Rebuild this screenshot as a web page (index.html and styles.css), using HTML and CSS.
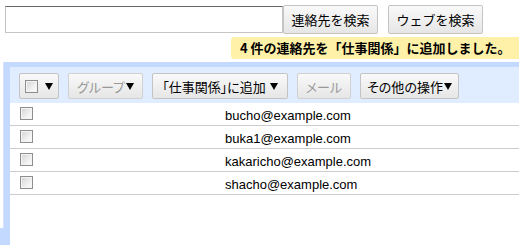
FILE: index.html
```html
<!DOCTYPE html>
<html lang="ja">
<head>
<meta charset="utf-8">
<link rel="stylesheet" href="styles.css">
</head>
<body>
<div class="search">
  <input class="search-input" type="text">
  <button class="btn btn-top first">連絡先を検索</button>
  <button class="btn btn-top">ウェブを検索</button>
</div>
<div class="notice-row">
  <div class="notice">4 件の連絡先を「仕事関係」に追加しました。</div>
</div>
<div class="main">
  <div class="nav">
    <div class="nav-box"></div>
    <div class="nav-foot"></div>
  </div>
  <div class="panel">
    <div class="toolbar">
      <button class="btn btn-tool sel"><span class="cb"></span><span class="arrow"></span></button>
      <button class="btn btn-tool disabled w-group">グループ<span class="arrow tight"></span></button>
      <button class="btn btn-tool w-add">「仕事関係」に追加 <span class="arrow"></span></button>
      <button class="btn btn-tool disabled w-mail">メール</button>
      <button class="btn btn-tool w-more">その他の操作<span class="arrow tight"></span></button>
    </div>
    <div class="list">
      <div class="row"><span class="cb"></span><span class="email">bucho@example.com</span></div>
      <div class="row"><span class="cb"></span><span class="email">buka1@example.com</span></div>
      <div class="row"><span class="cb"></span><span class="email">kakaricho@example.com</span></div>
      <div class="row"><span class="cb"></span><span class="email">shacho@example.com</span></div>
    </div>
  </div>
</div>
</body>
</html>
```
FILE: styles.css
```css
html, body {
  margin: 0;
  padding: 0;
  background: #fff;
  height: 245px;
  overflow: hidden;
}
body {
  font-family: "Liberation Sans", "Noto Sans CJK JP", sans-serif;
  font-size: 13px;
  color: #000;
}
.search {
  display: flex;
  align-items: flex-start;
  padding: 5px 0 0 5px;
  height: 29px;
}
.search-input {
  box-sizing: border-box;
  width: 278px;
  height: 27px;
  margin: 1px 0 0 0;
  border: 1px solid #c4c4c4;
  border-top-color: #666;
  padding: 0 4px;
  font: inherit;
  outline: none;
}
.btn {
  box-sizing: border-box;
  font-family: "Noto Sans CJK JP", "Liberation Sans", sans-serif;
  font-size: 13px;
  color: #000;
  border: 1px solid #c4c4c4;
  border-radius: 2px;
  background: linear-gradient(#f9f9f9, #e6e6e6);
  padding: 0;
  margin: 0;
  display: inline-flex;
  align-items: center;
  justify-content: center;
  line-height: 1;
  white-space: nowrap;
}
.btn-top {
  height: 29px;
  width: 95px;
  margin-left: 10px;
}
.btn-top.first {
  margin-left: 0;
}
.notice-row {
  display: flex;
  justify-content: flex-end;
  margin-top: 3px;
}
.notice {
  box-sizing: border-box;
  width: 288px;
  height: 22px;
  background: #fff1a8;
  border-radius: 3px 0 0 3px;
  font-family: "Noto Sans CJK JP", "Liberation Sans", sans-serif;
  font-weight: bold;
  font-size: 13px;
  line-height: 22px;
  padding-left: 9px;
  white-space: nowrap;
}
.main {
  display: flex;
  margin-top: 3px;
  height: 183px;
}
.nav {
  width: 4px;
  display: flex;
  flex-direction: column;
}
.nav-box {
  flex: 1;
  background: #fff;
  border-right: 1px solid #d6e3fb;
  box-sizing: border-box;
}
.nav-foot {
  height: 17px;
  background: #c3d9ff;
}
.panel {
  flex: 1;
  background: #c3d9ff;
  padding: 5px 0 0 6px;
  display: flex;
  flex-direction: column;
}
.toolbar {
  height: 36px;
  box-sizing: border-box;
  background: #e0ecff;
  display: flex;
  align-items: flex-start;
  padding: 6px 0 0 9px;
  gap: 9px;
}
.btn-tool {
  height: 26px;
  padding: 0;
  font-feature-settings: "palt";
}
.btn-tool.sel {
  width: 40px;
  padding: 0 0 0 5px;
  justify-content: flex-start;
  gap: 7px;
}
.btn-tool.disabled {
  color: #999;
  border-color: #d0d0d0;
}
.w-group { width: 75px; }
.w-add { width: 136px; }
.w-mail { width: 54px; }
.w-more { width: 99px; }
.arrow {
  display: inline-block;
  width: 0;
  height: 0;
  border-left: 4px solid transparent;
  border-right: 4px solid transparent;
  border-top: 7px solid #000;
  margin-left: 4px;
  margin-top: 1px;
}
.arrow.tight {
  margin-left: 1px;
}
.sel .arrow {
  margin-left: 0;
}
.cb {
  display: inline-block;
  box-sizing: border-box;
  width: 13px;
  height: 13px;
  border: 1px solid #8e8e8e;
  background: linear-gradient(135deg, #d2d2d2 0%, #f0f0f0 60%, #ffffff 100%);
  box-shadow: inset 0 0 0 1px #f4f4f4;
  flex: none;
}
.list {
  flex: 1;
  background: #fff;
}
.row {
  height: 23px;
  box-sizing: border-box;
  border-bottom: 1px solid #cccccc;
  display: flex;
  align-items: flex-start;
  padding-top: 4px;
  padding-left: 10px;
}
.email {
  margin-left: 192px;
  margin-top: 1px;
  font-family: "Liberation Sans", Arial, sans-serif;
  font-size: 13px;
  line-height: 15px;
}
```
